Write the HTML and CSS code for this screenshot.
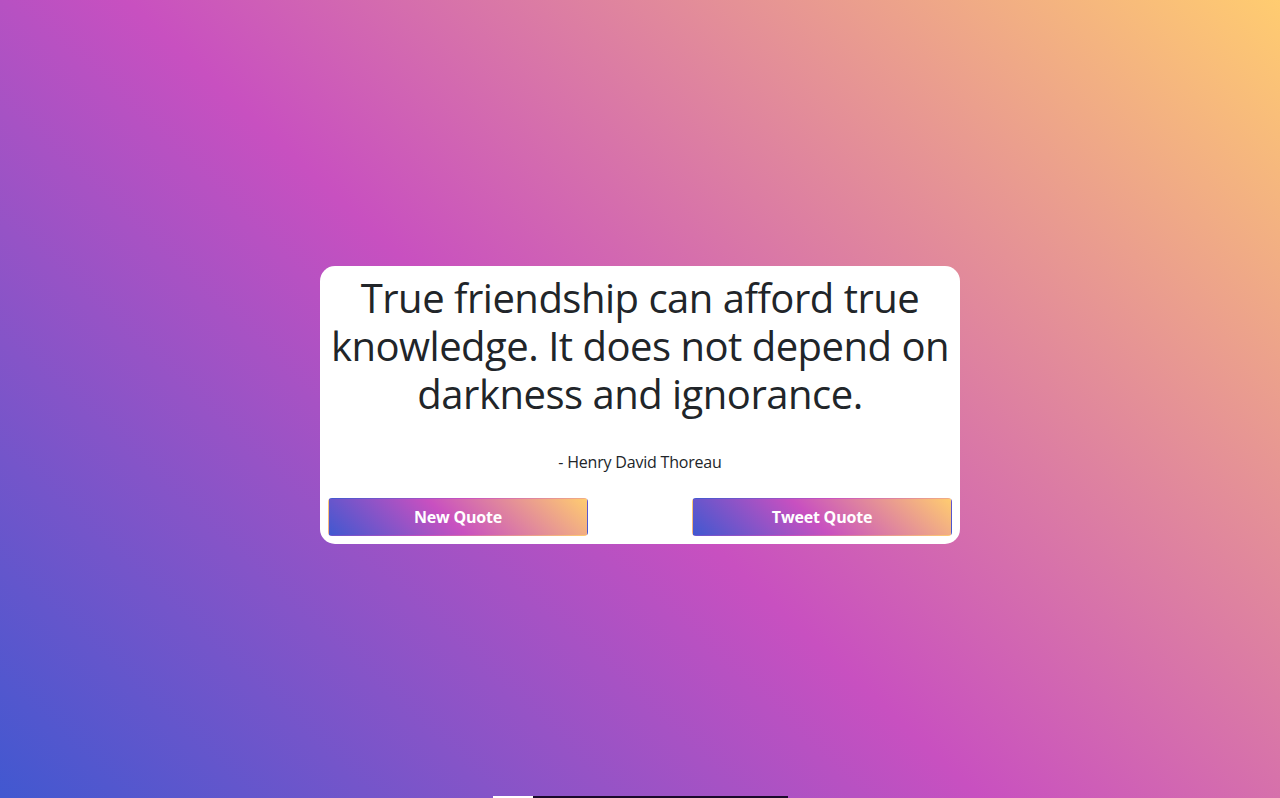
FILE: index.html
```html
<!DOCTYPE html>
<html lang="en">
<head>
<meta charset="utf-8">
<title>Random Quote Machine</title>
<link rel="stylesheet" href="styles.css">
</head>
<body>
<main class="page">
  <div class="quote-box">
    <h1 class="quote-text">True friendship can afford true knowledge. It does not depend on darkness and ignorance.</h1>
    <p class="quote-author">- Henry David Thoreau</p>
    <div class="actions">
      <button class="btn" type="button">New Quote</button>
      <button class="btn" type="button">Tweet Quote</button>
    </div>
  </div>
</main>
<div class="footer-strip"><span class="strip-light"></span><span class="strip-dark"></span></div>
</body>
</html>
```

FILE: styles.css
```css
html, body {
  margin: 0;
  padding: 0;
}
body {
  font-family: "Open Sans", "Noto Sans", sans-serif;
  color: #212529;
  background: linear-gradient(43deg, #4158D0 0%, #C850C0 46%, #FFCC70 100%);
  height: 798px;
  overflow: hidden;
}
.page {
  box-sizing: border-box;
  height: 796px;
  padding-top: 14px;
  display: flex;
  align-items: center;
  justify-content: center;
}
.quote-box {
  box-sizing: border-box;
  width: 640px;
  background: #fff;
  border-radius: 15px;
  padding: 8px;
  text-align: center;
}
.quote-text {
  margin: 0 0 32px;
  font-size: 40px;
  line-height: 48px;
  font-weight: 500;
  letter-spacing: -0.5px;
}
.quote-author {
  margin: 0 0 24px;
  font-size: 16px;
  line-height: 24px;
  letter-spacing: -0.2px;
}
.actions {
  display: flex;
  justify-content: space-between;
}
.btn {
  box-sizing: border-box;
  width: 260px;
  height: 38px;
  border: 1px solid transparent;
  border-radius: 4px;
  background: linear-gradient(43deg, #4158D0 0%, #C850C0 46%, #FFCC70 100%);
  color: #fff;
  font-family: inherit;
  font-size: 16px;
  font-weight: 700;
  line-height: 24px;
  padding: 6px 12px;
  letter-spacing: -0.2px;
  cursor: pointer;
}
.footer-strip {
  display: flex;
  margin-left: 493px;
  height: 2px;
}
.strip-light {
  width: 40px;
  background: #fff;
}
.strip-dark {
  width: 255px;
  background: #1a0a2a;
}
```
